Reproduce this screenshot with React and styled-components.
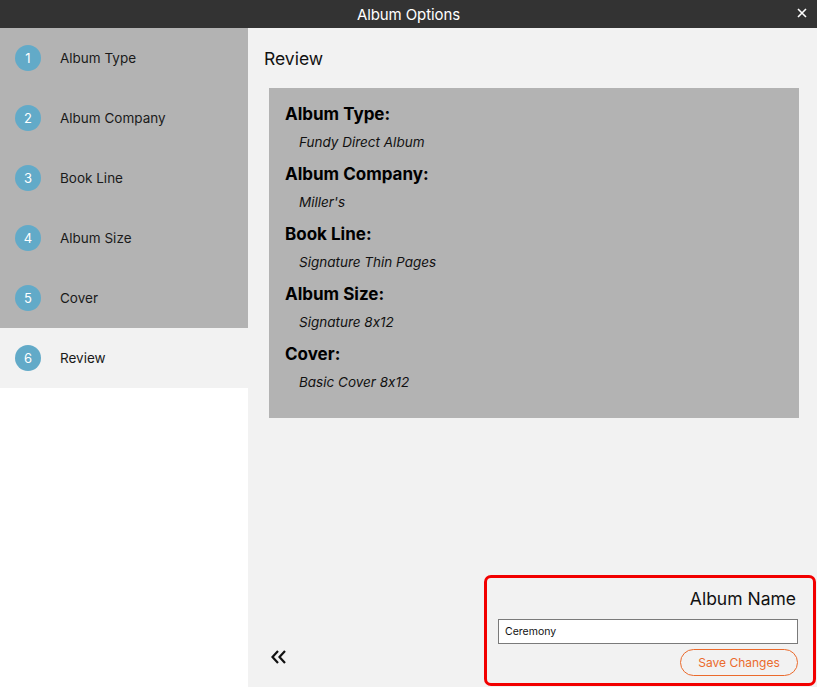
import React from 'react'
import styled, { createGlobalStyle } from 'styled-components'

const GlobalStyle = createGlobalStyle`
  html, body {
    margin: 0;
    padding: 0;
    background: #ffffff;
  }
  body {
    font-family: Inter, "Noto Sans", "Liberation Sans", sans-serif;
    font-feature-settings: "calt" 0;
    color: #111;
  }
  * { box-sizing: border-box; }
`

const STEPS = ['Album Type', 'Album Company', 'Book Line', 'Album Size', 'Cover', 'Review']

const SUMMARY = [
  { label: 'Album Type:', value: 'Fundy Direct Album' },
  { label: 'Album Company:', value: "Miller's" },
  { label: 'Book Line:', value: 'Signature Thin Pages' },
  { label: 'Album Size:', value: 'Signature 8x12' },
  { label: 'Cover:', value: 'Basic Cover 8x12' },
]

const Window = styled.div`
  display: flex;
  flex-direction: column;
  width: 817px;
  height: 687px;
  overflow: hidden;
`

const TitleBar = styled.div`
  position: relative;
  height: 28px;
  flex-shrink: 0;
  background: #333333;
  color: #ffffff;
  display: flex;
  align-items: center;
  justify-content: center;
  font-size: 15px;
  letter-spacing: -0.1px;
`

const CloseButton = styled.span`
  position: absolute;
  right: 8px;
  top: 6px;
  width: 14px;
  height: 14px;
  display: flex;
  align-items: center;
  justify-content: center;
`

const Body = styled.div`
  flex: 1;
  display: flex;
  min-height: 0;
`

const Sidebar = styled.nav`
  width: 248px;
  flex-shrink: 0;
  background: #ffffff;
  display: flex;
  flex-direction: column;
`

const StepRow = styled.div`
  height: 60px;
  display: flex;
  align-items: center;
  padding-left: 15px;
  gap: 19px;
  background: ${p => (p.$active ? '#f2f2f2' : '#b3b3b3')};
  font-size: 13.5px;
  color: #1a1a1a;
`

const StepNumber = styled.span`
  width: 26px;
  height: 26px;
  border-radius: 50%;
  background: #62aac8;
  color: #ffffff;
  display: flex;
  align-items: center;
  justify-content: center;
  font-size: 13px;
`

const Main = styled.main`
  flex: 1;
  background: #f2f2f2;
  display: flex;
  flex-direction: column;
  min-width: 0;
`

const Heading = styled.h2`
  margin: 0;
  height: 60px;
  display: flex;
  align-items: center;
  padding: 0 0 0 16px;
  font-size: 17.5px;
  font-weight: 400;
  color: #111;
`

const SummaryBox = styled.section`
  margin: 0 18px 0 21px;
  height: 330px;
  background: #b3b3b3;
  padding: 12px 16px 0;
`

const SummaryItem = styled.div`
  height: 60px;
  display: flex;
  flex-direction: column;
`

const SummaryLabel = styled.div`
  height: 28px;
  display: flex;
  align-items: center;
  font-size: 17px;
  font-weight: 700;
  color: #000;
`

const SummaryValue = styled.div`
  height: 28px;
  display: flex;
  align-items: center;
  padding-left: 14px;
  font-size: 13.5px;
  font-style: italic;
  color: #111;
`

const Footer = styled.div`
  margin-top: auto;
  display: flex;
  align-items: flex-end;
  justify-content: space-between;
  padding: 0 1px 1px 21px;
`

const BackButton = styled.button`
  border: none;
  background: none;
  padding: 0;
  margin-bottom: 20px;
  width: 20px;
  height: 18px;
  display: flex;
  align-items: center;
  justify-content: center;
  cursor: pointer;
`

const NamePanel = styled.div`
  width: 332px;
  height: 111px;
  border: 3px solid #f20000;
  border-radius: 7px;
  padding: 9px 15px 0 12px;
  display: flex;
  flex-direction: column;
  align-items: flex-end;
`

const NameLabel = styled.label`
  font-size: 17.5px;
  color: #111;
  height: 23px;
  display: flex;
  align-items: center;
  padding-right: 2px;
`

const NameInput = styled.input`
  margin-top: 9px;
  width: 300px;
  height: 25px;
  border: 1px solid #7a7a7a;
  background: #ffffff;
  padding: 0 6px;
  font-family: inherit;
  font-size: 10.5px;
  color: #111;
  outline: none;
`

const SaveButton = styled.button`
  margin-top: 5px;
  width: 118px;
  height: 27px;
  border: 1px solid #eb6a2c;
  border-radius: 14px;
  background: transparent;
  color: #eb6a2c;
  font-family: inherit;
  font-size: 12px;
  cursor: pointer;
`

export default function App() {
  return (
    <Window>
      <GlobalStyle />
      <TitleBar>
        Album Options
        <CloseButton>
          <svg width="10" height="10" viewBox="0 0 10 10">
            <path d="M1 1 L9 9 M9 1 L1 9" stroke="#fff" strokeWidth="1.6" />
          </svg>
        </CloseButton>
      </TitleBar>
      <Body>
        <Sidebar>
          {STEPS.map((s, i) => (
            <StepRow key={s} $active={i === STEPS.length - 1}>
              <StepNumber>{i + 1}</StepNumber>
              {s}
            </StepRow>
          ))}
        </Sidebar>
        <Main>
          <Heading>Review</Heading>
          <SummaryBox>
            {SUMMARY.map(item => (
              <SummaryItem key={item.label}>
                <SummaryLabel>{item.label}</SummaryLabel>
                <SummaryValue>{item.value}</SummaryValue>
              </SummaryItem>
            ))}
          </SummaryBox>
          <Footer>
            <BackButton aria-label="Back">
              <svg width="18" height="16" viewBox="0 0 18 16">
                <path d="M8 2 L2.5 8 L8 14 M15 2 L9.5 8 L15 14" fill="none" stroke="#111" strokeWidth="2.2" />
              </svg>
            </BackButton>
            <NamePanel>
              <NameLabel>Album Name</NameLabel>
              <NameInput defaultValue="Ceremony" />
              <SaveButton>Save Changes</SaveButton>
            </NamePanel>
          </Footer>
        </Main>
      </Body>
    </Window>
  )
}
